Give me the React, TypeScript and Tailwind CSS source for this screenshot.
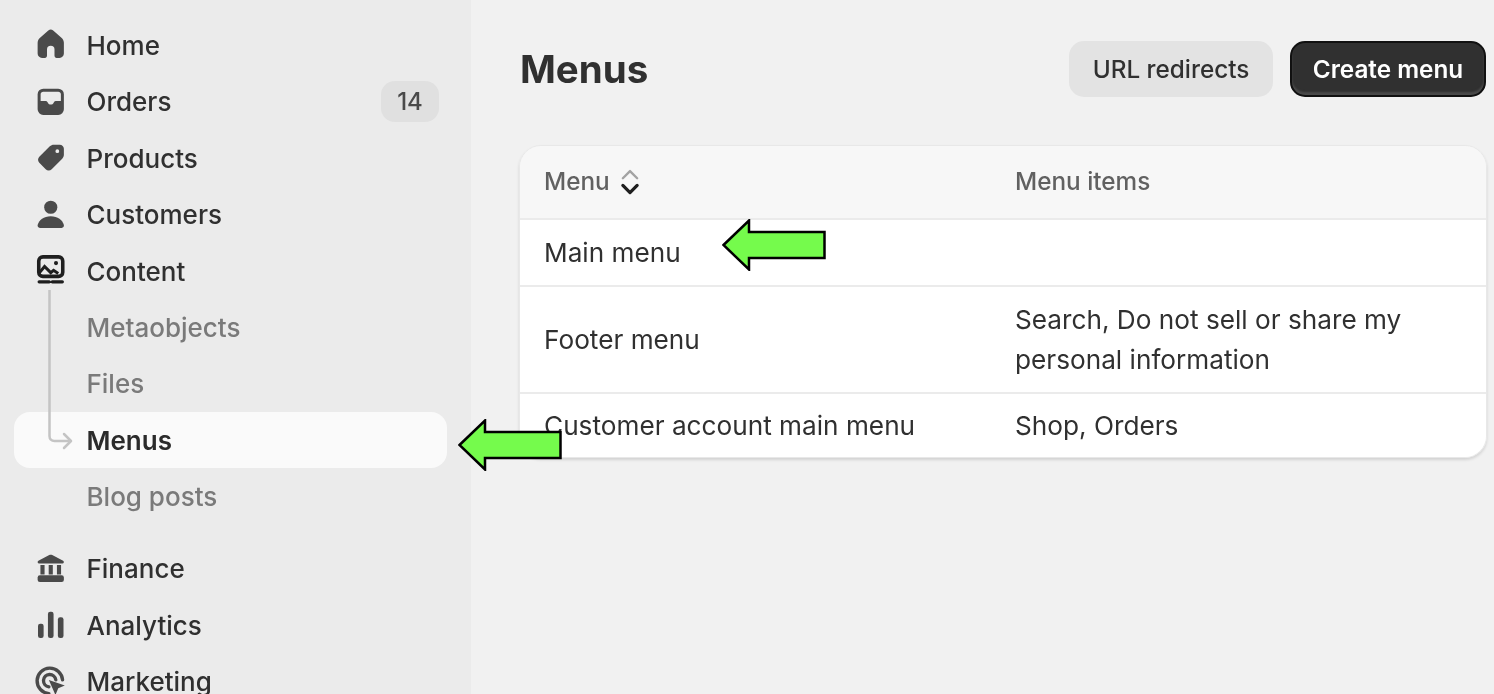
import React from 'react';

const FONT = { fontFamily: 'Inter, "Liberation Sans", sans-serif' };

const HomeIcon = () => (
  <svg viewBox="0 0 20 20" className="w-full h-full" fill="currentColor">
    <path d="M8.700 2.400a2 2 0 0 1 2.600 0l4.400 3.800c.8.700 1.300 1.700 1.300 2.700v5.800c0 1.300-1 2.300-2.300 2.300h-1.600c-.6 0-1.100-.5-1.100-1.100v-3.400a2 2 0 0 0-4 0v3.400c0 .6-.5 1.100-1.100 1.100H5.300A2.300 2.300 0 0 1 3 14.700V8.900c0-1 .5-2 1.300-2.700z" />
  </svg>
);

const OrdersIcon = () => (
  <svg viewBox="0 0 20 20" className="w-full h-full" fill="currentColor">
    <path
      fillRule="evenodd"
      d="M6 3h8a3 3 0 0 1 3 3v8a3 3 0 0 1-3 3H6a3 3 0 0 1-3-3V6a3 3 0 0 1 3-3m0 1.600c-.8 0-1.400.6-1.400 1.400v3.600h2.700c.4 0 .8.200 1 .6l.4.700c.2.300.5.500.9.500h.8c.4 0 .7-.2.900-.5l.4-.7c.2-.4.6-.6 1-.6h2.700V6c0-.8-.6-1.400-1.400-1.400z"
    />
  </svg>
);

const TagIcon = () => (
  <svg viewBox="0 0 20 20" className="w-full h-full" fill="currentColor">
    <path
      fillRule="evenodd"
      d="M11.600 3h3.200C16 3 17 4 17 5.200v3.200c0 .8-.3 1.500-.9 2.100l-5.600 5.600c-.9.900-2.300.900-3.200 0l-3.400-3.400c-.9-.9-.9-2.300 0-3.200L9.500 3.900c.6-.6 1.300-.9 2.100-.9m1.900 2.500a1 1 0 1 0 0 2 1 1 0 0 0 0-2"
    />
  </svg>
);

const PersonIcon = () => (
  <svg viewBox="0 0 20 20" className="w-full h-full" fill="currentColor">
    <circle cx="10" cy="6" r="3.500" />
    <path d="M10 10.800c-3.700 0-6.300 2-7 4.700-.2.800.4 1.500 1.200 1.500h11.600c.8 0 1.400-.7 1.200-1.500-.7-2.700-3.300-4.700-7-4.700" />
  </svg>
);

const ContentIcon = () => (
  <svg viewBox="0 0 20 20" className="w-full h-full" fill="none" stroke="currentColor">
    <rect x="3.600" y="2.600" width="12.800" height="10.400" rx="2.200" strokeWidth="1.900" />
    <circle cx="12.800" cy="5.900" r="1.100" fill="currentColor" stroke="none" />
    <path d="m4 11 2.700-3.300 3.300 3.300 1.500-1.200 2.500 1.700" strokeWidth="1.600" />
    <path d="M3.800 15.900h5.400M10.800 15.900h5.400" strokeWidth="1.700" strokeLinecap="round" />
  </svg>
);

const FinanceIcon = () => (
  <svg viewBox="0 0 20 20" className="w-full h-full" fill="currentColor">
    <path d="M9.200 2.700c.5-.3 1.100-.3 1.600 0l5.800 3c.7.400.4 1.500-.4 1.500H3.800c-.8 0-1.100-1.100-.4-1.500z" />
    <path d="M4.500 8h2.200v5H4.500zM8.900 8h2.200v5H8.900zM13.300 8h2.200v5h-2.200z" />
    <rect x="3" y="13.500" width="14" height="3.500" rx="1.200" />
  </svg>
);

const AnalyticsIcon = () => (
  <svg viewBox="0 0 20 20" className="w-full h-full" fill="currentColor">
    <rect x="3.200" y="9.500" width="3" height="7.500" rx="1.200" />
    <rect x="8.500" y="3" width="3" height="14" rx="1.200" />
    <rect x="13.800" y="6" width="3" height="11" rx="1.200" />
  </svg>
);

const MarketingIcon = () => (
  <svg viewBox="0 0 20 20" className="w-full h-full" fill="none" stroke="currentColor">
    <path d="M9 16.300a6.800 6.800 0 1 1 7.300-7.300" strokeWidth="1.800" strokeLinecap="round" />
    <path d="M9 12.700A3.300 3.300 0 1 1 12.700 9" strokeWidth="1.800" strokeLinecap="round" />
    <path d="m9 9 8.500 3-3.500 1.500-1.500 3.500z" fill="currentColor" stroke="none" />
  </svg>
);

const SortIcon = () => (
  <svg viewBox="0 0 20 20" className="w-[34px] h-[34px] -my-[8px]" fill="none" strokeLinecap="round" strokeLinejoin="round">
    <path d="m5.800 7.800 4.200-4.200 4.200 4.200" stroke="#a3a3a3" strokeWidth="1.400" />
    <path d="m5.800 12 4.200 4.200 4.200-4.200" stroke="#1f1f1f" strokeWidth="1.900" />
  </svg>
);

const GreenArrow = ({ className }: { className: string }) => (
  <svg viewBox="0 0 104 52" className={className}>
    <path d="M1.500 26 27 1.500V13h75.500v26H27v11.500z" fill="#75fb4c" stroke="#000" strokeWidth="2.500" />
  </svg>
);

const NavRow = ({
  icon,
  label,
  sub,
  active,
  dark,
  badge,
}: {
  icon?: React.ReactNode;
  label: string;
  sub?: boolean;
  active?: boolean;
  dark?: boolean;
  badge?: string;
}) => (
  <div
    className={`h-[56.4px] ml-[14px] mr-[24px] pl-[17.5px] pr-[8px] flex items-center gap-[17.5px] rounded-[16px] shrink-0 ${
      active ? 'bg-[#fafafa]' : ''
    }`}
  >
    <span className={`w-[37.5px] h-[37.5px] shrink-0 ${dark ? 'text-[#1f1f1f]' : 'text-[#4a4a4a]'}`}>{icon}</span>
    <span
      className={`pt-[1.5px] text-[26px] font-medium leading-none ${
        sub && !active ? 'text-[#7a7a7a]' : active ? 'text-[#2b2b2b] font-semibold' : 'text-[#303030]'
      }`}
    >
      {label}
    </span>
    {badge && (
      <span className="ml-auto w-[58px] h-[41px] rounded-[14px] bg-[#e0e0e0] text-[#4a4a4a] text-[24px] font-medium flex items-center justify-center">
        {badge}
      </span>
    )}
  </div>
);

const TableRow = ({ name, items, className }: { name: string; items?: React.ReactNode; className: string }) => (
  <div className={`grid grid-cols-[495px_1fr] items-center bg-white pt-[1px] text-[26.200px] leading-[40px] text-[#303030] ${className}`}>
    <div className="pl-[24px]">{name}</div>
    <div>{items}</div>
  </div>
);

export default function App() {
  return (
    <div className="relative h-[694px] overflow-hidden bg-[#f1f1f1]" style={FONT}>
      {/* the capture is a slightly soft upscale, arrows were pasted on top and stay sharp */}
      <div className="flex h-full blur-[0.5px]">
        {/* Sidebar */}
        <aside className="relative w-[471px] shrink-0 bg-[#ebebeb] pt-[17px] flex flex-col">
          <NavRow icon={<HomeIcon />} label="Home" />
          <NavRow icon={<OrdersIcon />} label="Orders" badge="14" />
          <NavRow icon={<TagIcon />} label="Products" />
          <NavRow icon={<PersonIcon />} label="Customers" />
          <NavRow icon={<ContentIcon />} label="Content" dark />
          <NavRow label="Metaobjects" sub />
          <NavRow label="Files" sub />
          <NavRow label="Menus" sub active />
          <NavRow label="Blog posts" sub />
          <div className="h-[16px] shrink-0" />
          <NavRow icon={<FinanceIcon />} label="Finance" />
          <NavRow icon={<AnalyticsIcon />} label="Analytics" />
          <NavRow icon={<MarketingIcon />} label="Marketing" />

          {/* tree connector for the Content children */}
          <svg className="absolute left-[44px] top-[290px] w-[32px] h-[165px]" viewBox="0 0 32 165" fill="none" stroke="#c4c4c4" strokeWidth="2.500">
            <path d="M5.500 0v146c0 3 2 5 5 5h15" />
            <path d="m20 144 7 7-7 7" strokeLinecap="round" strokeLinejoin="round" />
          </svg>
        </aside>

        {/* Main */}
        <main className="flex-1 pl-[48px] pr-[7px] pt-[41px]">
          <div className="flex items-center justify-between h-[56px] mb-[48px]">
            <h1 className="pl-[1px] pt-[1px] text-[38.500px] font-bold text-[#303030]">Menus</h1>
            <div className="flex gap-[17px] mr-[1px]">
              <button className="w-[204px] h-[56px] rounded-[15px] bg-[#e3e3e3] text-[#303030] text-[24.300px] font-medium">
                URL redirects
              </button>
              <button className="w-[196px] h-[56px] rounded-[15px] bg-[#303030] border-2 border-[#111] shadow-[inset_0_-3px_2px_#4a4a4a] text-white text-[24.300px] font-semibold">
                Create menu
              </button>
            </div>
          </div>

          <div className="rounded-[22px] overflow-hidden border border-[#e8e8e8] shadow-[0_2px_3px_rgba(0,0,0,0.13)]">
            <div className="grid grid-cols-[495px_1fr] items-center h-[72px] pb-[1px] bg-[#f7f7f7] text-[24.300px] font-medium text-[#616161]">
              <div className="pl-[24px] flex items-center gap-[3px]">
                Menu <SortIcon />
              </div>
              <div>Menu items</div>
            </div>
            <TableRow name="Main menu" className="h-[67px] border-t-2 border-[#ebebeb]" />
            <TableRow
              name="Footer menu"
              className="h-[107px] border-t-2 border-[#ebebeb]"
              items={
                <>
                  Search, Do not sell or share my
                  <br />
                  personal information
                </>
              }
            />
            <TableRow name="Customer account main menu" items="Shop, Orders" className="h-[65px] border-t-2 border-[#ebebeb]" />
          </div>
        </main>
      </div>

      {/* Annotation arrows */}
      <GreenArrow className="absolute left-[722px] top-[219px] w-[104px] h-[52px]" />
      <GreenArrow className="absolute left-[458px] top-[419px] w-[104px] h-[52px]" />
    </div>
  );
}
